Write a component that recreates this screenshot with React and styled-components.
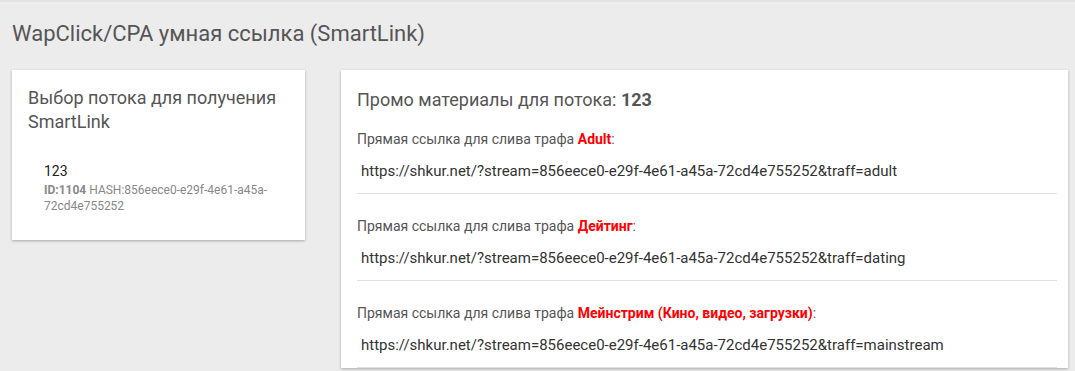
import React from 'react';
import styled, { createGlobalStyle } from 'styled-components';

const GlobalStyle = createGlobalStyle`
  html, body {
    margin: 0;
    padding: 0;
    background: #ececec;
    font-family: Roboto, "Liberation Sans", Arial, sans-serif;
    color: #555;
  }
`;

const Page = styled.div`
  border-top: 2px solid #e2e2e2;
  min-height: 369px;
`;

const Header = styled.h1`
  margin: 0;
  padding: 17px 12px 0;
  height: 51px;
  font-size: 22px;
  font-weight: 400;
  color: #555;
  line-height: 30px;
`;

const Layout = styled.div`
  display: flex;
  align-items: flex-start;
  gap: 36px;
  padding: 0 7px 0 12px;
`;

const Card = styled.section`
  background: #fff;
  box-shadow: 0 1px 3px rgba(0, 0, 0, 0.18), 0 1px 2px rgba(0, 0, 0, 0.12);
  width: ${p => p.$width || 'auto'};
  flex: ${p => (p.$grow ? 1 : 'none')};
  box-sizing: border-box;
`;

const SideCard = styled(Card)`
  padding: 16px 16px 26px;
`;

const MainCard = styled(Card)`
  padding: 18px 11px 0 16px;
`;

const CardTitle = styled.h2`
  margin: 0;
  font-size: 18px;
  font-weight: 400;
  line-height: 24px;
  color: #555;

  b {
    font-weight: 700;
  }
`;

const StreamItem = styled.div`
  margin: 27px 0 0 16px;
`;

const StreamName = styled.div`
  font-size: 14px;
  color: #222;
  line-height: 21px;
`;

const StreamMeta = styled.div`
  font-size: 12px;
  color: #888;
  line-height: 16px;

  b {
    font-weight: 700;
  }
`;

const Section = styled.div`
  padding-top: ${p => (p.$first ? '17px' : '22px')};
  border-bottom: 1px solid #e0e0e0;
`;

const Label = styled.div`
  font-size: 14px;
  line-height: 20px;
  color: #555;
`;

const Accent = styled.span`
  color: #f00;
  font-weight: 700;
`;

const LinkText = styled.div`
  font-size: 15px;
  color: #333;
  line-height: 20px;
  padding: 12px 0 12px 4px;
`;

const links = [
  { name: 'Adult', traff: 'adult' },
  { name: 'Дейтинг', traff: 'dating' },
  { name: 'Мейнстрим (Кино, видео, загрузки)', traff: 'mainstream' },
];

export default function App() {
  return (
    <>
      <GlobalStyle />
      <Page>
        <Header>WapClick/CPA умная ссылка (SmartLink)</Header>
        <Layout>
          <SideCard $width="293px">
            <CardTitle>Выбор потока для получения SmartLink</CardTitle>
            <StreamItem>
              <StreamName>123</StreamName>
              <StreamMeta>
                <b>ID:1104</b> HASH:856eece0-e29f-4e61-a45a-72cd4e755252
              </StreamMeta>
            </StreamItem>
          </SideCard>
          <MainCard $grow>
            <CardTitle>
              Промо материалы для потока: <b>123</b>
            </CardTitle>
            {links.map((l, i) => (
              <Section key={l.traff} $first={i === 0}>
                <Label>
                  Прямая ссылка для слива трафа <Accent>{l.name}</Accent>:
                </Label>
                <LinkText>
                  https://shkur.net/?stream=856eece0-e29f-4e61-a45a-72cd4e755252&amp;traff={l.traff}
                </LinkText>
              </Section>
            ))}
          </MainCard>
        </Layout>
      </Page>
    </>
  );
}
